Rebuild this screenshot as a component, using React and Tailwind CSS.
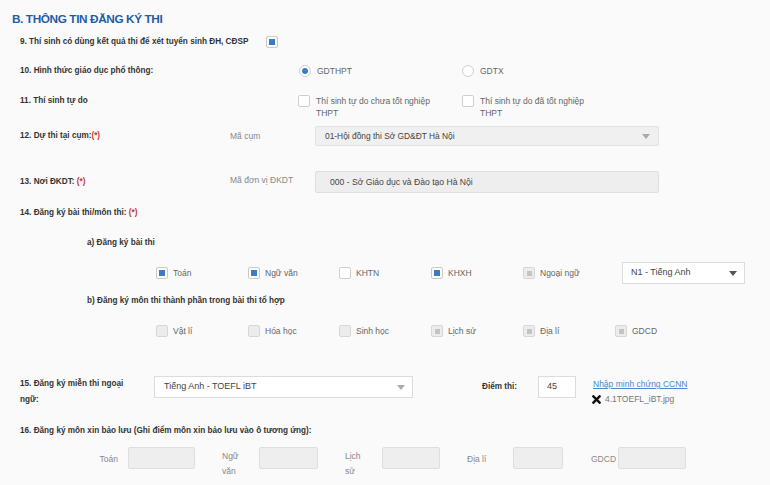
import { FaTimes } from 'react-icons/fa'

const font = { fontFamily: '"Liberation Sans", Arial, sans-serif' }

function Box({ state = 'empty' }) {
  // state: checked | empty | disabled | disabledMark
  const base = 'w-[12px] h-[12px] rounded-[2px] border flex items-center justify-center shrink-0'
  if (state === 'checked')
    return (
      <span className={`${base} border-[#c9c9c9] bg-white`}>
        <span className="w-[6px] h-[6px] bg-[#3b7cc4]" />
      </span>
    )
  if (state === 'disabled') return <span className={`${base} border-[#d6d6d6] bg-[#ececec]`} />
  if (state === 'disabledMark')
    return (
      <span className={`${base} border-[#d6d6d6] bg-[#ececec]`}>
        <span className="w-[5px] h-[5px] bg-[#c4c4c4]" />
      </span>
    )
  return <span className={`${base} border-[#cfcfcf] bg-white`} />
}

function Radio({ on }) {
  return (
    <span className="w-[12px] h-[12px] rounded-full border border-[#cfcfcf] bg-white flex items-center justify-center shrink-0">
      {on && <span className="w-[6px] h-[6px] rounded-full bg-[#3b7cc4]" />}
    </span>
  )
}

function Arrow({ dark }) {
  return (
    <svg width="8" height="5" viewBox="0 0 8 5">
      <path d="M0 0 L8 0 L4 5 Z" fill={dark ? '#555' : '#aaa'} />
    </svg>
  )
}

const Req = () => <span className="text-[#c0392b] font-bold">(*)</span>

function Check({ state, label, w = 'w-[92px]' }) {
  return (
    <div className={`flex items-center gap-[5px] ${w}`}>
      <Box state={state} />
      <span className="text-[#666]">{label}</span>
    </div>
  )
}

export default function App() {
  return (
    <div style={font} className="w-[770px] h-[485px] bg-[#fafafa] overflow-hidden text-[8.5px] text-[#444]">
      <h2 className="mt-[10px] h-[20px] flex items-center pl-[12px] text-[11.8px] font-bold text-[#1f5ca6] tracking-[-0.4px]">
        B. THÔNG TIN ĐĂNG KÝ THI
      </h2>

      <div className="mt-[2px] h-[20px] flex items-center pl-[20px]">
        <span className="w-[246px] font-bold text-[#333] text-[8.2px]">9. Thí sinh có dùng kết quả thi để xét tuyển sinh ĐH, CĐSP</span>
        <Box state="checked" />
      </div>

      <div className="mt-[9px] h-[20px] flex items-center pl-[20px]">
        <span className="w-[279px] font-bold text-[#333] text-[8.2px]">10. Hình thức giáo dục phổ thông:</span>
        <div className="w-[163px] flex items-center gap-[6px]">
          <Radio on />
          <span className="text-[#666]">GDTHPT</span>
        </div>
        <div className="flex items-center gap-[6px]">
          <Radio />
          <span className="text-[#666]">GDTX</span>
        </div>
      </div>

      <div className="mt-[14px] h-[24px] flex items-start pl-[20px] leading-[12px]">
        <span className="w-[278px] font-bold text-[#333] text-[8.2px]">11. Thí sinh tự do</span>
        <div className="w-[164px] flex items-start gap-[6px]">
          <Box />
          <span className="text-[#666]">Thí sinh tự do chưa tốt nghiệp<br />THPT</span>
        </div>
        <div className="flex items-start gap-[6px]">
          <Box />
          <span className="text-[#666]">Thí sinh tự do đã tốt nghiệp<br />THPT</span>
        </div>
      </div>

      <div className="mt-[7px] h-[20px] flex items-center pl-[20px]">
        <span className="w-[210px] font-bold text-[#333] text-[8.2px]">12. Dự thi tại cụm:<Req /></span>
        <span className="w-[85px] text-[#888]">Mã cụm</span>
        <div className="w-[344px] h-[20px] rounded-[2px] border border-[#e2e2e2] bg-[#f0f0f0] flex items-center justify-between pl-[9px] pr-[8px] text-[8.4px] text-[#444]">
          <span>01-Hội đồng thi Sở GD&amp;ĐT Hà Nội</span>
          <Arrow />
        </div>
      </div>

      <div className="mt-[25px] h-[22px] flex items-center pl-[20px]">
        <span className="w-[210px] font-bold text-[#333] text-[8.2px]">13. Nơi ĐKDT: <Req /></span>
        <span className="w-[85px] text-[#888] -mt-[4px]">Mã đơn vị ĐKDT</span>
        <div className="w-[344px] h-[22px] rounded-[2px] border border-[#dedede] bg-[#eeeeee] flex items-center pl-[14px] text-[8.6px] text-[#444]">
          000 - Sở Giáo dục và Đào tạo Hà Nội
        </div>
      </div>

      <div className="mt-[12px] h-[16px] flex items-center pl-[20px] font-bold text-[#333] text-[8.2px]">
        14. Đăng ký bài thi/môn thi:&nbsp;<Req />
      </div>

      <div className="mt-[14px] h-[16px] flex items-center pl-[87px] font-bold text-[#333] text-[8.2px]">
        a) Đăng ký bài thi
      </div>

      <div className="mt-[11px] h-[22px] flex items-center pl-[156px]">
        <Check state="checked" label="Toán" />
        <Check state="checked" label="Ngữ văn" w="w-[91px]" />
        <Check state="empty" label="KHTN" />
        <Check state="checked" label="KHXH" />
        <Check state="disabledMark" label="Ngoại ngữ" w="w-[99px]" />
        <div className="w-[123px] h-[22px] border border-[#dcdcdc] bg-white flex items-center justify-between pl-[8px] pr-[7px] text-[9px] text-[#444]">
          <span>N1 - Tiếng Anh</span>
          <Arrow dark />
        </div>
      </div>

      <div className="mt-[9px] h-[16px] flex items-center pl-[87px] font-bold text-[#333] text-[8.2px]">
        b) Đăng ký môn thi thành phần trong bài thi tổ hợp
      </div>

      <div className="mt-[12px] h-[20px] flex items-center pl-[156px]">
        <Check state="disabled" label="Vật lí" />
        <Check state="disabled" label="Hóa học" w="w-[91px]" />
        <Check state="disabled" label="Sinh học" />
        <Check state="disabledMark" label="Lịch sử" />
        <Check state="disabledMark" label="Địa lí" />
        <Check state="disabledMark" label="GDCD" />
      </div>

      <div className="mt-[35px] flex items-start pl-[20px]">
        <span className="w-[134px] font-bold text-[#333] text-[8.2px] leading-[16px]">15. Đăng ký miễn thi ngoại<br />ngữ:</span>
        <div className="w-[259px] h-[22px] border border-[#dcdcdc] bg-white flex items-center justify-between pl-[9px] pr-[7px] text-[9px] text-[#444]">
          <span>Tiếng Anh - TOEFL iBT</span>
          <Arrow />
        </div>
        <span className="ml-[69px] w-[56px] h-[22px] flex items-center font-bold text-[#333] text-[8.2px]">Điểm thi:</span>
        <div className="w-[38px] h-[22px] border border-[#dcdcdc] bg-white flex items-center pl-[8px] text-[9px] text-[#444]">45</div>
        <div className="ml-[17px] flex flex-col">
          <span className="text-[#4a8bd0] underline leading-[16px]">Nhập minh chứng CCNN</span>
          <span className="flex items-center gap-[2px] text-[#777] -ml-[3px] mt-[1px]">
            <FaTimes className="text-[13px] text-[#111]" />
            4.1TOEFL_iBT.jpg
          </span>
        </div>
      </div>

      <div className="mt-[15px] h-[16px] flex items-center pl-[20px] font-bold text-[#333] text-[8.2px]">
        16. Đăng ký môn xin bảo lưu (Ghi điểm môn xin bảo lưu vào ô tương ứng):
      </div>

      <div className="mt-[8px] flex items-start pl-[80px] text-[#888] leading-[15px]">
        <span className="w-[38px] text-right pt-[5px]">Toán</span>
        <span className="ml-[10px] w-[67px] h-[22px] rounded-[2px] border border-[#dedede] bg-[#eeeeee]" />
        <span className="ml-[27px] w-[37px] pt-[2px]">Ngữ<br />văn</span>
        <span className="w-[59px] h-[22px] rounded-[2px] border border-[#dedede] bg-[#eeeeee]" />
        <span className="ml-[27px] w-[37px] pt-[2px]">Lịch<br />sử</span>
        <span className="w-[58px] h-[22px] rounded-[2px] border border-[#dedede] bg-[#eeeeee]" />
        <span className="ml-[27px] w-[46px] pt-[5px]">Địa lí</span>
        <span className="w-[50px] h-[22px] rounded-[2px] border border-[#dedede] bg-[#eeeeee]" />
        <span className="ml-[28px] w-[27px] pt-[5px]">GDCD</span>
        <span className="w-[68px] h-[22px] rounded-[2px] border border-[#dedede] bg-[#eeeeee]" />
      </div>
    </div>
  )
}
